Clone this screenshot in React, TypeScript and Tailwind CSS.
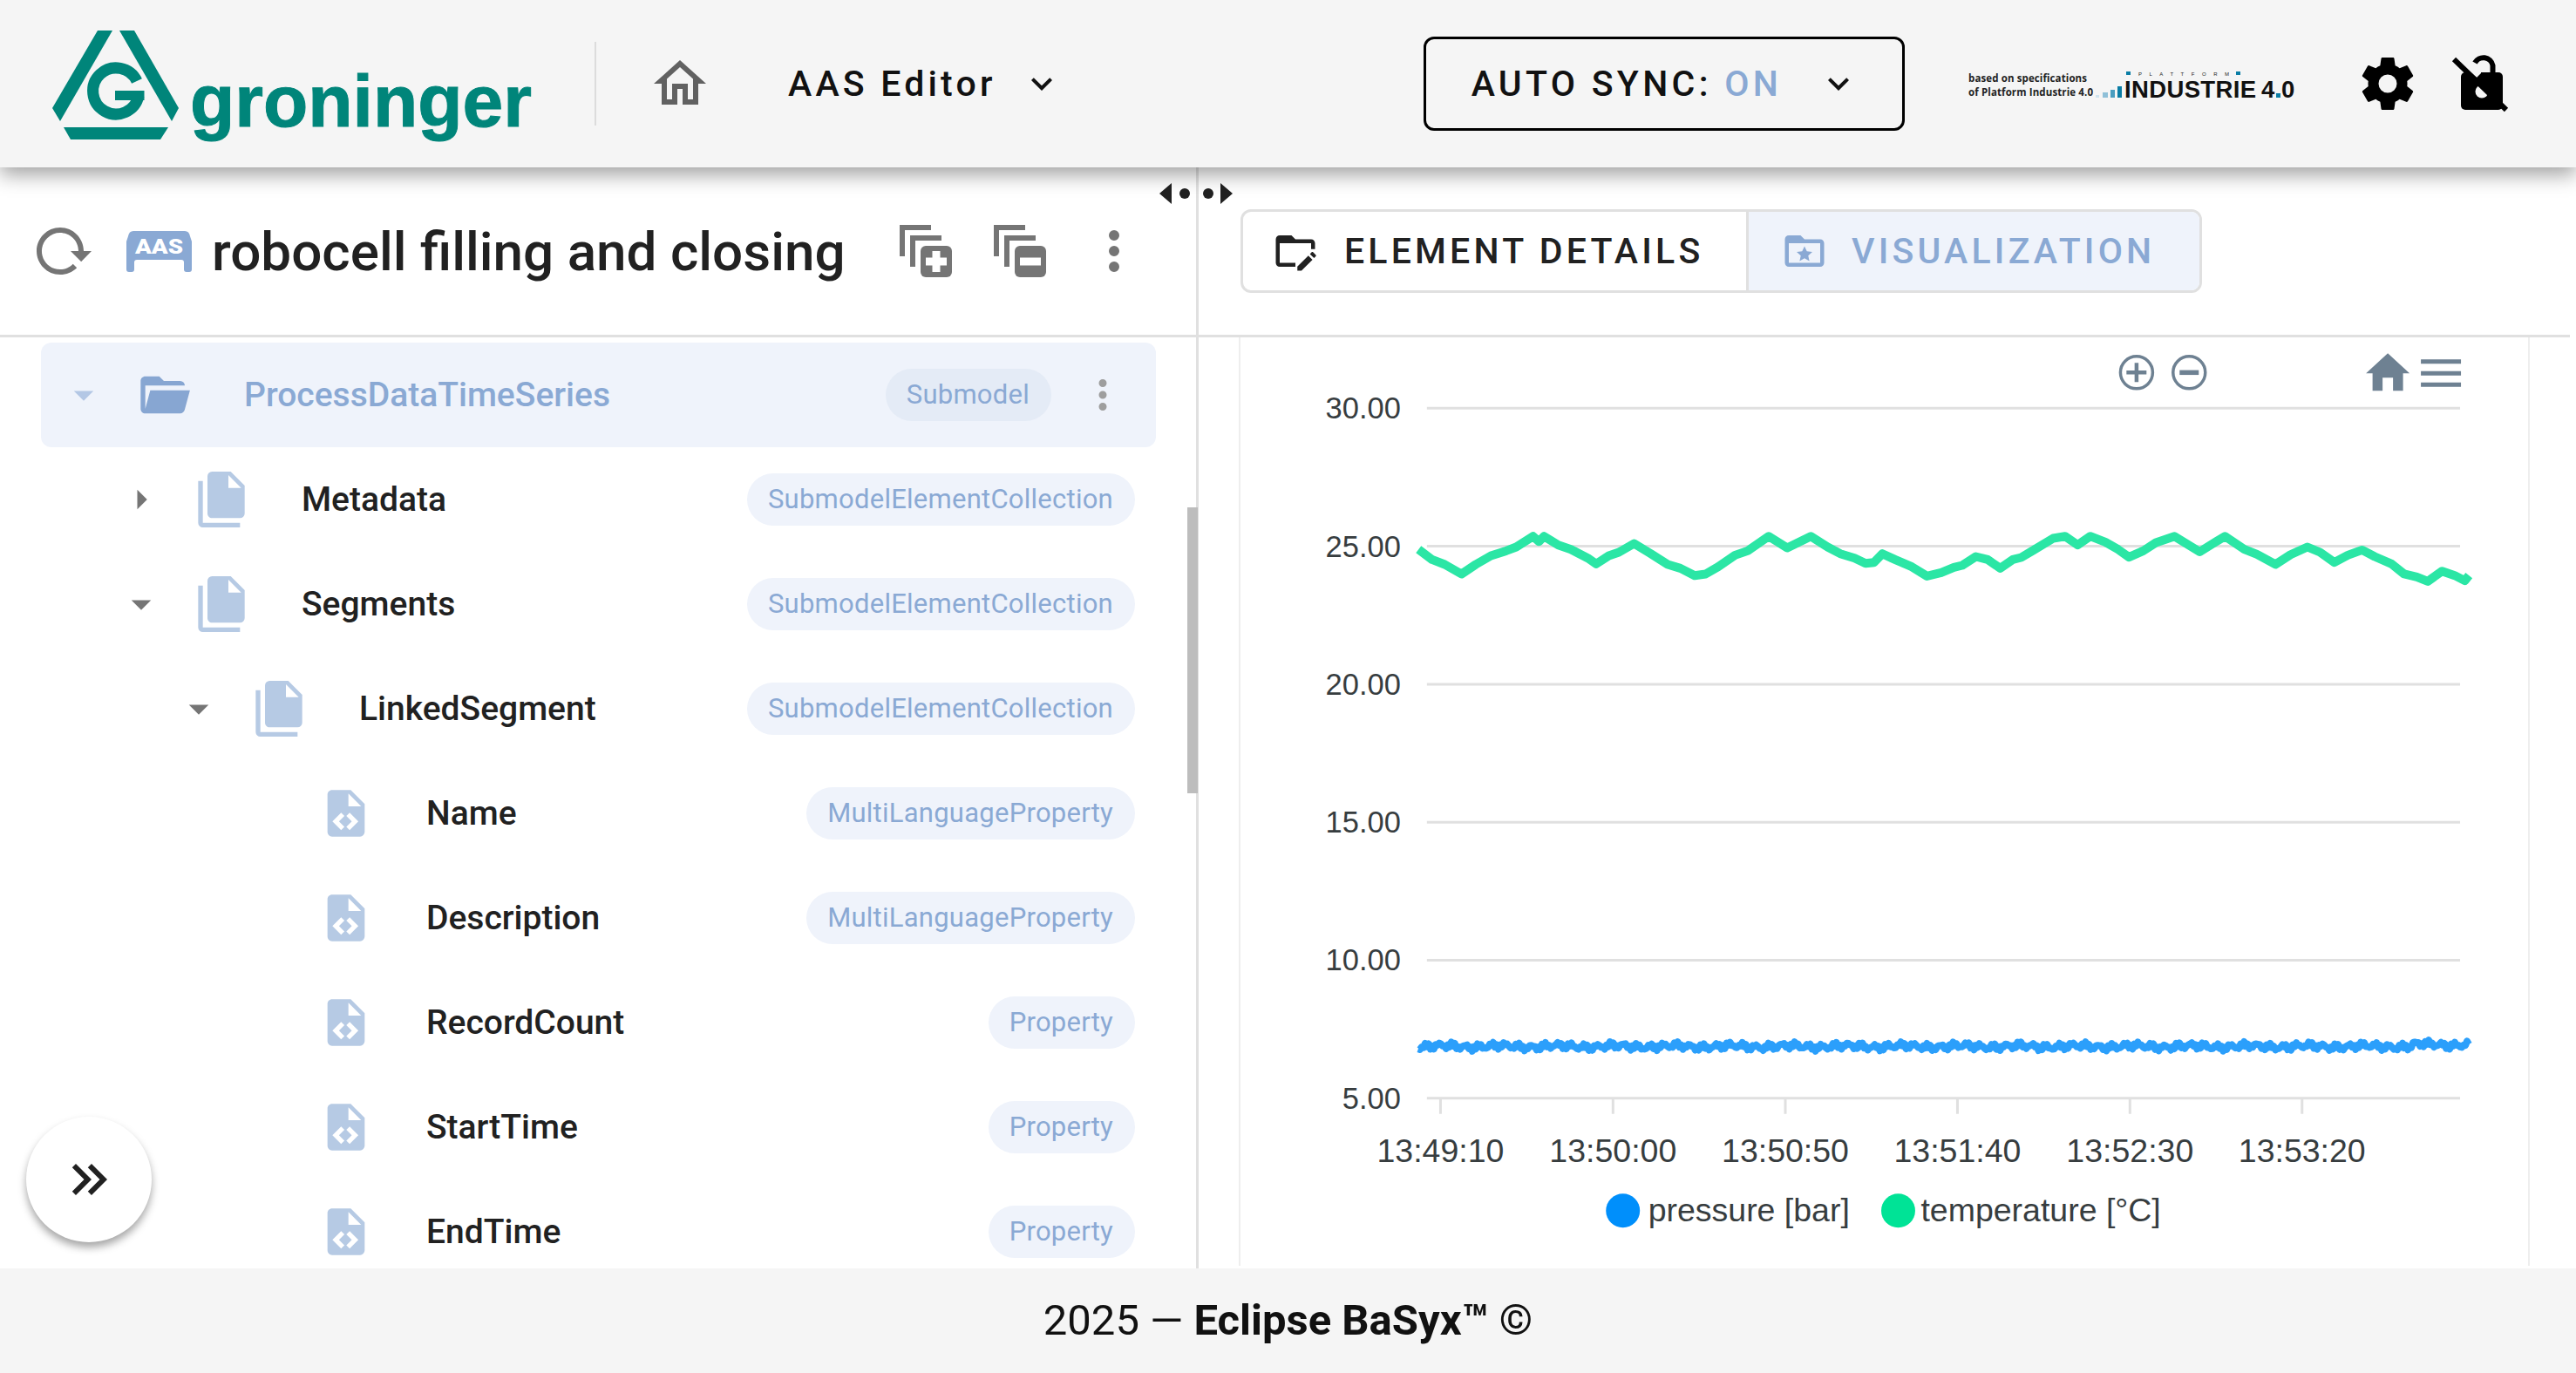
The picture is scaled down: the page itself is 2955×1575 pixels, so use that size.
const icons = {
  home: 'M12 5.69L17 10.19V18H15V12H9V18H7V10.19L12 5.69M12 3L2 12H5V20H11V14H13V20H19V12H22L12 3Z',
  chevron: 'M7.41,8.58L12,13.17L16.59,8.58L18,10L12,16L6,10L7.41,8.58Z',
  cog: 'M12,15.5A3.5,3.5 0 0,1 8.5,12A3.5,3.5 0 0,1 12,8.5A3.5,3.5 0 0,1 15.5,12A3.5,3.5 0 0,1 12,15.5M19.43,12.97C19.47,12.65 19.5,12.33 19.5,12C19.5,11.67 19.47,11.34 19.43,11L21.54,9.37C21.73,9.22 21.78,8.95 21.66,8.73L19.66,5.27C19.54,5.05 19.27,4.96 19.05,5.05L16.56,6.05C16.04,5.66 15.5,5.32 14.87,5.07L14.5,2.42C14.46,2.18 14.25,2 14,2H10C9.75,2 9.54,2.18 9.5,2.42L9.13,5.07C8.5,5.32 7.96,5.66 7.44,6.05L4.95,5.05C4.73,4.96 4.46,5.05 4.34,5.27L2.34,8.73C2.21,8.95 2.27,9.22 2.46,9.37L4.57,11C4.53,11.34 4.5,11.67 4.5,12C4.5,12.33 4.53,12.65 4.57,12.97L2.46,14.63C2.27,14.78 2.21,15.05 2.34,15.27L4.34,18.73C4.46,18.95 4.73,19.03 4.95,18.95L7.44,17.94C7.96,18.34 8.5,18.68 9.13,18.93L9.5,21.58C9.54,21.82 9.75,22 10,22H14C14.25,22 14.46,21.82 14.5,21.58L14.87,18.93C15.5,18.67 16.04,18.34 16.56,17.94L19.05,18.95C19.27,19.03 19.54,18.95 19.66,18.73L21.66,15.27C21.78,15.05 21.73,14.78 21.54,14.63L19.43,12.97Z',
  reload: 'M2 12C2 16.97 6.03 21 11 21C13.39 21 15.68 20.06 17.4 18.4L15.9 16.9C14.63 18.25 12.86 19 11 19C4.76 19 1.64 11.46 6.05 7.05C10.46 2.64 18 5.77 18 12H15L19 16H19.1L23 12H20C20 7.03 15.97 3 11 3C6.03 3 2 7.03 2 12Z',
  dots: 'M12,16A2,2 0 0,1 14,18A2,2 0 0,1 12,20A2,2 0 0,1 10,18A2,2 0 0,1 12,16M12,10A2,2 0 0,1 14,12A2,2 0 0,1 12,14A2,2 0 0,1 10,12A2,2 0 0,1 12,10M12,4A2,2 0 0,1 14,6A2,2 0 0,1 12,8A2,2 0 0,1 10,6A2,2 0 0,1 12,4Z',
  folderOpen: 'M19,20H4C2.89,20 2,19.1 2,18V6C2,4.89 2.89,4 4,4H10L12,6H19A2,2 0 0,1 21,8H21L4,8V18L6.14,10H23.21L20.93,18.5C20.7,19.37 19.92,20 19,20Z',
  fileMultiple: 'M15,7H20.5L15,1.5V7M8,0H16L22,6V18A2,2 0 0,1 20,20H8C6.89,20 6,19.1 6,18V2A2,2 0 0,1 8,0M4,4V22H20V24H4A2,2 0 0,1 2,22V4H4Z',
  fileCode: 'M13,9H18.5L13,3.5V9M6,2H14L20,8V20A2,2 0 0,1 18,22H6C4.89,22 4,21.1 4,20V4C4,2.89 4.89,2 6,2M6.12,15.5L9.86,19.24L11.28,17.83L8.95,15.5L11.28,13.17L9.86,11.76L6.12,15.5M17.28,15.5L13.54,11.76L12.12,13.17L14.45,15.5L12.12,17.83L13.54,19.24L17.28,15.5Z',
  menuDown: 'M7,10L12,15L17,10H7Z',
  menuRight: 'M10,17L15,12L10,7V17Z',
  doubleRight: 'M5.59,7.41L7,6L13,12L7,18L5.59,16.59L10.17,12L5.59,7.41M11.59,7.41L13,6L19,12L13,18L11.59,16.59L16.17,12L11.59,7.41Z',
  folderEdit: 'M4 18H12V20H4C2.9 20 2 19.1 2 18V6C2 4.89 2.89 4 4 4H10L12 6H20C21.1 6 22 6.89 22 8V11H20V8H4V18M13 22v-2.1l5.6-5.6 2.1 2.1L15.1 22H13zM19.4 13.5l.9-.9c.2-.2.5-.2.7 0l1.4 1.4c.2.2.2.5 0 .7l-.9.9z',
  folderStar: 'M20 6h-8l-2-2H4c-1.11 0-2 .89-2 2v12c0 1.11.89 2 2 2h16c1.11 0 2-.89 2-2V8c0-1.11-.89-2-2-2m0 12H4V8h16v10zM12 9.5l1.2 2.6 2.8.3-2.1 1.9.6 2.8-2.5-1.4-2.5 1.4.6-2.8L8 12.4l2.8-.3z',
}

function Mdi({ d, className }: { d: string; className: string }) {
  return (
    <svg viewBox="0 0 24 24" className={`shrink-0 fill-current ${className}`}>
      <path d={d} />
    </svg>
  )
}

function GroningerLogo() {
  return (
    <svg viewBox="40 20 600 150" className="w-[600px] h-[150px] shrink-0 ml-[40px] mt-[2px] fill-[#00857a]">
      <polygon points="112,33 129,33 69,137 60,122" />
      <polygon points="137,33 154,33 205,122 197,137" />
      <polygon points="73,144 193,144 184,158 81,158" />
      <path d="M157 91 A26.5 26.5 0 1 0 159 108" fill="none" stroke="#00857a" strokeWidth="13" />
      <rect x="132" y="102" width="33.5" height="11" />
      <text x="218" y="143" fontFamily="'Liberation Sans', sans-serif" fontWeight="700" fontSize="83" textLength="392" lengthAdjust="spacingAndGlyphs" stroke="#00857a" strokeWidth="1">groninger</text>
    </svg>
  )
}

function PlattformLogo() {
  return (
    <svg viewBox="2250 70 390 50" className="w-[390px] h-[50px] shrink-0 ml-[66px]">
      <g fontFamily="'Open Sans', sans-serif" fontWeight="700" fontSize="11.5" fill="#222">
        <text x="2257" y="93" textLength="136">based on specifications</text>
        <text x="2257" y="109" textLength="143">of Platform Industrie 4.0</text>
      </g>
      <rect x="2403" y="108" width="4" height="3" fill="#cfe3ee" />
      <rect x="2411" y="105" width="6" height="6" fill="#8fc0d8" />
      <rect x="2420" y="102" width="5" height="9" fill="#4a9dc0" />
      <rect x="2428" y="98" width="5" height="13" fill="#0a7da5" />
      <rect x="2438" y="81" width="5" height="4" fill="#0a7da5" />
      <rect x="2564" y="81" width="5" height="4" fill="#0a7da5" />
      <text x="2452" y="85.5" fontFamily="'Liberation Sans', sans-serif" fontSize="6" fill="#222" textLength="104">PLATTFORM</text>
      <g fontFamily="'Liberation Sans', sans-serif" fontWeight="700" fontSize="27.5" fill="#111">
        <text x="2436" y="111" textLength="151">INDUSTRIE</text>
        <text x="2593" y="111">4</text>
        <text x="2616" y="111">0</text>
      </g>
      <rect x="2610" y="106" width="5" height="5" fill="#0a7da5" />
    </svg>
  )
}

function LockOff() {
  return (
    <svg viewBox="0 0 72 72" className="w-[72px] h-[72px] shrink-0 ml-[35px]">
      <path d="M29 12 A11 11 0 0 1 49.5 15 V24" fill="none" stroke="#000" strokeWidth="6" />
      <rect x="13" y="23" width="48" height="43" rx="5" fill="#000" />
      <circle cx="37" cy="45" r="7.5" fill="#f5f5f5" />
      <polygon points="28,28 46,46 52,30 40,24" fill="#000" />
      <polygon points="21,20 36,20 36,24 31,29" fill="#f5f5f5" />
      <line x1="5" y1="8" x2="65" y2="66" stroke="#000" strokeWidth="6" />
    </svg>
  )
}

function AasIcon() {
  return (
    <svg viewBox="0 0 75 47" className="w-[75px] h-[47px] shrink-0 ml-[37px] fill-[#8aa9d4]">
      <path d="M8 0H67Q72 0 73 6L75 12V44Q75 47 72 47H69Q66 47 66 44V36Q66 33 63 33H12Q9 33 9 36V44Q9 47 6 47H3Q0 47 0 44V12L2 6Q3 0 8 0Z" />
      <text x="10" y="26" fill="#fff" fontFamily="Roboto, sans-serif" fontWeight="900" fontSize="23" textLength="55" lengthAdjust="spacingAndGlyphs">AAS</text>
    </svg>
  )
}

function ExpandIcon({ plus, className }: { plus: boolean; className: string }) {
  return (
    <svg viewBox="0 0 60 60" className={`w-[60px] h-[60px] shrink-0 fill-[#757575] ${className}`}>
      <path d="M0 36V0H36V6H6V36ZM12 48V12H48V18H18V48Z" />
      <rect x="24" y="24" width="36" height="36" rx="6" />
      <rect x="30" y="37.5" width="24" height="9" fill="#fff" />
      {plus && <rect x="37.5" y="30" width="9" height="24" fill="#fff" />}
    </svg>
  )
}

interface Row {
  label: string
  chip: string
  icon: string
  arrow?: string
  pad: string
  selected?: boolean
}

const rows: Row[] = [
  { label: 'ProcessDataTimeSeries', chip: 'Submodel', icon: icons.folderOpen, arrow: icons.menuDown, pad: 'pl-[22px]', selected: true },
  { label: 'Metadata', chip: 'SubmodelElementCollection', icon: icons.fileMultiple, arrow: icons.menuRight, pad: 'pl-[88px]' },
  { label: 'Segments', chip: 'SubmodelElementCollection', icon: icons.fileMultiple, arrow: icons.menuDown, pad: 'pl-[88px]' },
  { label: 'LinkedSegment', chip: 'SubmodelElementCollection', icon: icons.fileMultiple, arrow: icons.menuDown, pad: 'pl-[154px]' },
  { label: 'Name', chip: 'MultiLanguageProperty', icon: icons.fileCode, pad: 'pl-[318px]' },
  { label: 'Description', chip: 'MultiLanguageProperty', icon: icons.fileCode, pad: 'pl-[318px]' },
  { label: 'RecordCount', chip: 'Property', icon: icons.fileCode, pad: 'pl-[318px]' },
  { label: 'StartTime', chip: 'Property', icon: icons.fileCode, pad: 'pl-[318px]' },
  { label: 'EndTime', chip: 'Property', icon: icons.fileCode, pad: 'pl-[318px]' },
]

function TreeRow({ row }: { row: Row }) {
  return (
    <div className={`flex items-center h-[120px] shrink-0 rounded-[12px] ${row.pad} ${row.selected ? 'bg-[#eff3fb] pr-[34px]' : 'pr-[24px]'}`}>
      {row.arrow && (
        <Mdi d={row.arrow} className={`w-[54px] h-[54px] mr-[33px] ${row.selected ? 'text-[#b3c7e5]' : 'text-[#757575]'}`} />
      )}
      <Mdi d={row.icon} className={`w-[64px] h-[64px] ${row.selected ? 'text-[#87a6d2]' : 'text-[#b6cae4]'}`} />
      <span className={`ml-[60px] text-[39px] font-medium ${row.selected ? 'text-[#8aa9d4]' : 'text-[#212121]'}`}>{row.label}</span>
      <span className={`ml-auto h-[60px] pl-[24px] pr-[25px] flex items-center rounded-full text-[31px] tracking-[0.25px] text-[#8aa9d4] ${row.selected ? 'bg-[#e4ebf6]' : 'bg-[#eff3fb]'}`}>
        {row.chip}
      </span>
      {row.selected && <Mdi d={icons.dots} className="w-[54px] h-[54px] ml-[32px] text-[#9e9e9e]" />}
    </div>
  )
}

// points read off the reference, in page pixels
const greenRaw = [
  194, 720, 210, 755, 225, 772, 245, 805, 262, 772, 280, 742, 298, 725, 310, 712, 330, 675, 337, 693, 343, 675, 360, 705, 375, 720, 395, 750, 405, 770, 420, 742, 432, 730, 450, 700, 470, 735, 490, 772, 505, 785, 522, 810, 535, 805, 550, 780, 570, 740, 585, 725, 610, 675, 632, 715, 660, 675, 680, 712, 695, 735, 712, 750, 725, 768, 735, 765, 745, 735, 760, 755, 780, 780, 798, 812, 815, 800, 830, 782, 840, 775, 856, 745, 870, 755, 885, 785, 900, 755, 910, 748, 925, 722, 948, 682, 962, 675, 977, 705, 992, 675, 1010, 695, 1025, 720, 1038, 747, 1055, 725, 1070, 697, 1092, 675, 1122, 728, 1152, 675, 1175, 720, 1190, 737, 1212, 772, 1230, 738, 1250, 712, 1265, 730, 1282, 765, 1298, 740, 1315, 722, 1330, 745, 1350, 770, 1365, 805, 1380, 815, 1393, 830, 1410, 795, 1425, 810, 1437, 828, 1442, 810,
]
const greenPoints = greenRaw
  .reduce<string[]>((acc, v, i) => {
    if (i % 2 === 0) acc.push(`${(1440 + v / 1.035).toFixed(1)},${(390 + greenRaw[i + 1] / 3).toFixed(1)}`)
    return acc
  }, [])
  .join(' ')

const bluePoints = Array.from({ length: 604 }, (_, i) => {
  const x = 1627 + i * 2
  const y = 1200.5 + 2.2 * Math.sin(i * 2.9) + 2.2 * Math.sin(i * 0.83 + 1) + 1.2 * Math.sin(i * 0.19 + 2) + (i > 570 ? -2 : 0)
  return `${x},${y.toFixed(1)}`
}).join(' ')

const gridY = [468, 626.4, 784.8, 943.2, 1101.6, 1260]
const yLabels = ['30.00', '25.00', '20.00', '15.00', '10.00', '5.00']
const ticks = [
  { x: 1652.6, label: '13:49:10' },
  { x: 1850.6, label: '13:50:00' },
  { x: 2048.4, label: '13:50:50' },
  { x: 2246, label: '13:51:40' },
  { x: 2444, label: '13:52:30' },
  { x: 2641.6, label: '13:53:20' },
]

function Chart() {
  return (
    <svg viewBox="1423 387 1478 1065" className="w-full h-full block">
      <g fontFamily="'Liberation Sans', Arial, sans-serif" fill="#373d3f">
        {gridY.map((y, i) => (
          <g key={y}>
            <line x1="1637" x2="2823" y1={y} y2={y} stroke="#e0e0e0" strokeWidth="3" />
            <text x="1607" y={y + 12} textAnchor="end" fontSize="34.5">{yLabels[i]}</text>
          </g>
        ))}
        {ticks.map((t) => (
          <g key={t.label}>
            <line x1={t.x} x2={t.x} y1="1261" y2="1278" stroke="#e0e0e0" strokeWidth="3" />
            <text x={t.x} y="1333" textAnchor="middle" fontSize="37.5">{t.label}</text>
          </g>
        ))}
        <circle cx="1862" cy="1389" r="19.5" fill="#008ffb" />
        <text x="1891" y="1401" fontSize="37.5">pressure [bar]</text>
        <circle cx="2178" cy="1389" r="19.5" fill="#00e396" />
        <text x="2204" y="1401" fontSize="37.5">temperature [°C]</text>
      </g>
      <polyline points={bluePoints} fill="none" stroke="#2b9ffb" strokeWidth="8" strokeLinejoin="round" />
      <polyline points={greenPoints} fill="none" stroke="#2be6a5" strokeWidth="10" strokeLinejoin="round" />
      <g fill="#6e8192" stroke="#6e8192">
        <circle cx="2451.6" cy="427" r="18.5" fill="none" strokeWidth="3.5" />
        <path d="M2440 427h23M2451.6 416v22" strokeWidth="4.5" fill="none" />
        <circle cx="2512" cy="427" r="18.5" fill="none" strokeWidth="3.5" />
        <path d="M2501 427h22" strokeWidth="5.5" fill="none" />
        <path d="M2740 405L2765 428H2757.5V448H2746V433H2734V448H2722.5V428H2715Z" stroke="none" />
        <path d="M2778 414.5h46M2778 428h46M2778 441h46" strokeWidth="5" fill="none" />
      </g>
    </svg>
  )
}

export default function App() {
  return (
    <div className="w-[2955px] h-[1575px] flex flex-col overflow-hidden bg-white font-['Roboto',sans-serif]">
      <header className="relative z-10 h-[192px] shrink-0 flex items-center bg-[#f5f5f5] shadow-[0_8px_22px_rgba(0,0,0,0.38)]">
        <GroningerLogo />
        <div className="w-[2px] h-[96px] ml-[42px] bg-[#dcdcdc]" />
        <Mdi d={icons.home} className="w-[72px] h-[72px] ml-[60px] text-[#616161]" />
        <span className="ml-[88px] mt-[2px] text-[41px] font-medium tracking-[4.2px] text-[#111]">AAS Editor</span>
        <Mdi d={icons.chevron} className="w-[48px] h-[48px] ml-[28px] text-[#111]" />
        <div className="w-[552px] h-[108px] ml-[414px] flex items-center rounded-[12px] border-[3px] border-black pl-[52px]">
          <span className="mt-[2px] text-[41px] font-medium tracking-[4.3px] text-[#111]">
            AUTO SYNC: <span className="text-[#8aa9d4]">ON</span>
          </span>
          <Mdi d={icons.chevron} className="w-[48px] h-[48px] ml-auto mr-[49px] text-[#111]" />
        </div>
        <PlattformLogo />
        <Mdi d={icons.cog} className="w-[72px] h-[72px] ml-[62px] text-black" />
        <LockOff />
      </header>

      <main className="flex-1 flex min-h-0">
        <section className="relative w-[1375px] shrink-0 flex flex-col border-r-[3px] border-[#e0e0e0]">
          <div className="h-[195px] shrink-0 flex items-center border-b-[3px] border-[#e0e0e0] pl-[36px]">
            <Mdi d={icons.reload} className="w-[72px] h-[72px] text-[#757575]" />
            <AasIcon />
            <h1 className="ml-[23px] text-[62px] font-medium text-[#212121] whitespace-nowrap">robocell filling and closing</h1>
            <ExpandIcon plus className="ml-[62px]" />
            <ExpandIcon plus={false} className="ml-[48px]" />
            <Mdi d={icons.dots} className="w-[72px] h-[72px] ml-[42px] text-[#757575]" />
          </div>
          <div className="flex-1 min-h-0 overflow-hidden flex flex-col pl-[47px] pr-[46px] pt-[6px]">
            {rows.map((row) => (
              <TreeRow key={row.label} row={row} />
            ))}
          </div>
          <div className="absolute right-[-2px] top-[390px] w-[12px] h-[328px] bg-[#bdbdbd]" />
          <button className="absolute left-[30px] bottom-[30px] w-[144px] h-[144px] rounded-full bg-white flex items-center justify-center shadow-[0_6px_10px_rgba(0,0,0,0.35)]">
            <Mdi d={icons.doubleRight} className="w-[72px] h-[72px] text-[#212121]" />
          </button>
          {/* splitter handle */}
          <div className="absolute right-[-42px] top-[18px] w-[84px] h-[24px] flex items-center">
            <div className="w-0 h-0 border-y-[12px] border-y-transparent border-r-[14px] border-r-[#212121]" />
            <div className="w-[12px] h-[12px] ml-[9px] rounded-full bg-[#212121]" />
            <div className="w-[12px] h-[12px] ml-[15px] rounded-full bg-[#212121]" />
            <div className="w-0 h-0 ml-[8px] border-y-[12px] border-y-transparent border-l-[14px] border-l-[#212121]" />
          </div>
        </section>

        <section className="flex-1 flex flex-col min-w-0 pr-[7px]">
          <div className="h-[195px] shrink-0 border-b-[3px] border-[#e0e0e0] pl-[48px] pt-[48px]">
            <div className="w-[1103px] h-[96px] flex rounded-[12px] border-[3px] border-[#e0e0e0] overflow-hidden">
              <div className="w-[580px] flex items-center pl-[33px] border-r-[3px] border-[#e0e0e0]">
                <Mdi d={icons.folderEdit} className="w-[54px] h-[54px] text-[#212121]" />
                <span className="ml-[29px] mt-[2px] text-[41px] font-medium tracking-[4.2px] text-[#212121]">ELEMENT DETAILS</span>
              </div>
              <div className="flex-1 flex items-center pl-[37px] bg-[#eff3fb]">
                <Mdi d={icons.folderStar} className="w-[54px] h-[54px] text-[#8aa9d4]" />
                <span className="ml-[27px] mt-[2px] text-[41px] font-medium tracking-[4.2px] text-[#8aa9d4]">VISUALIZATION</span>
              </div>
            </div>
          </div>
          <div className="ml-[46px] w-[1481px] h-[1065px] border-x-[2px] border-[#eeeeee]">
            <Chart />
          </div>
        </section>
      </main>

      <footer className="h-[120px] shrink-0 flex items-center justify-center bg-[#f5f5f5] text-[49px] text-[#111]">
        2025 — <span className="ml-[12px] font-bold">Eclipse BaSyx™ ©</span>
      </footer>
    </div>
  )
}
